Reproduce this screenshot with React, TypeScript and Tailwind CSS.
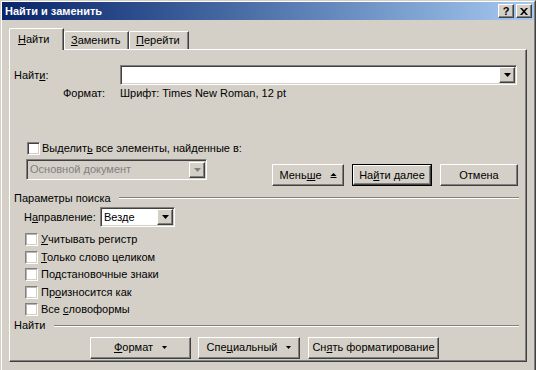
const raised =
  "border border-t-white border-l-white border-r-[#404040] border-b-[#404040] shadow-[inset_-1px_-1px_0_#808080] bg-[#d4d0c8]";
const sunken =
  "border border-t-[#808080] border-l-[#808080] border-r-white border-b-white shadow-[inset_1px_1px_0_#404040,inset_-1px_-1px_0_#d4d0c8]";

function U({ children }: { children: string }) {
  return <span className="underline underline-offset-[1px] decoration-1">{children}</span>;
}

function DownArrow({ color = "#000" }: { color?: string }) {
  return (
    <svg width="7" height="4" viewBox="0 0 7 4">
      <polygon points="0,0 7,0 3.5,4" fill={color} />
    </svg>
  );
}

function DropButton({ disabled }: { disabled?: boolean }) {
  return (
    <div className={`${raised} w-[16px] h-[16px] flex items-center justify-center`}>
      <DownArrow color={disabled ? "#808080" : "#000"} />
    </div>
  );
}

function CheckBox({ soft }: { soft?: boolean }) {
  return (
    <div
      className={
        soft
          ? "w-[13px] h-[13px] bg-white border border-t-[#808080] border-l-[#808080] border-r-white border-b-white shadow-[inset_1px_1px_0_#b8b4ac,inset_-1px_-1px_0_#d4d0c8]"
          : `w-[13px] h-[13px] bg-white ${sunken}`
      }
    />
  );
}

function Button({ width, children, isDefault }: { width: string; children: React.ReactNode; isDefault?: boolean }) {
  if (isDefault) {
    return (
      <div className={`${width} h-[22px] border border-black`}>
        <div className={`${raised} h-full flex items-center justify-center`}>{children}</div>
      </div>
    );
  }
  return <div className={`${raised} ${width} h-[22px] flex items-center justify-center`}>{children}</div>;
}

function Separator({ label, gap }: { label: string; gap: string }) {
  return (
    <div className="h-[14px] flex items-center pl-[4px] pr-[7px]">
      <span>{label}</span>
      <div className={`flex-1 ${gap} h-[2px] border-t border-t-[#808080] border-b border-b-white`} />
    </div>
  );
}

export default function App() {
  const options = [
    <>
      <U>У</U>читывать регистр
    </>,
    <>
      <U>Т</U>олько слово целиком
    </>,
    <>Подстановочные знаки</>,
    <>
      Пр<U>о</U>износится как
    </>,
    <>
      Все <U>с</U>ловоформы
    </>,
  ];

  return (
    <div className="w-[536px] h-[370px] overflow-hidden bg-[#d4d0c8] border-t border-l border-[#d4d0c8] border-r border-r-[#404040] font-['Liberation_Sans',Arial,sans-serif] text-[11px] leading-[13px] text-black">
      <div className="h-full border-t border-l border-white border-r border-r-[#808080]">
        {/* title bar */}
        <div className="h-[18px] bg-linear-to-r from-[#0a246a] to-[#a6caf0] flex items-center pl-[3px] pr-[2px]">
          <span className="text-white font-bold">Найти и заменить</span>
          <div className="ml-auto flex gap-[2px]">
            <div className={`${raised} w-[16px] h-[14px] flex items-center justify-center font-bold text-[11px] leading-none`}>?</div>
            <div className={`${raised} w-[16px] h-[14px] flex items-center justify-center`}>
              <svg width="8" height="7" viewBox="0 0 8 7">
                <path d="M0 0h2l2 2.2L6 0h2L5 3.5 8 7H6L4 4.8 2 7H0l3-3.5z" fill="#000" />
              </svg>
            </div>
          </div>
        </div>

        <div className="px-[7px]">
          {/* tabs */}
          <div className="mt-[8px] h-[21px] flex items-end">
            <div className="relative z-10 -mb-px w-[55px] h-[22px] bg-[#d4d0c8] border-t border-l border-white border-r border-r-[#404040] rounded-tl-[2px] shadow-[inset_-1px_0_0_#808080] flex items-center pl-[8px]">
              <span>
                <U>Н</U>айти
              </span>
            </div>
            <div className="w-[65px] h-[18px] border-t border-l border-white border-r border-r-[#404040] rounded-tl-[2px] shadow-[inset_-1px_0_0_#808080] flex items-center pl-[6px]">
              <span>
                <U>З</U>аменить
              </span>
            </div>
            <div className="w-[60px] h-[18px] border-t border-l border-white border-r border-r-[#404040] rounded-tl-[2px] shadow-[inset_-1px_0_0_#808080] flex items-center pl-[6px]">
              <span>
                <U>П</U>ерейти
              </span>
            </div>
          </div>

          {/* panel */}
          <div className="h-[313px] border border-t-white border-l-white border-r-[#404040] border-b-[#404040] shadow-[inset_-1px_-1px_0_#808080] flex flex-col">
            <div className="mt-[15px] h-[20px] flex items-center">
              <span className="pl-[4px] w-[110px]">
                Найт<U>и</U>:
              </span>
              <div className={`${sunken} bg-white w-[397px] h-[20px] flex items-center justify-end pr-[1px]`}>
                <DropButton />
              </div>
            </div>

            <div className="mt-[1px] h-[14px] flex items-center pl-[53px]">
              <span className="w-[57px]">Формат:</span>
              <span>Шрифт: Times New Roman, 12 pt</span>
            </div>

            <div className="mt-[41px] flex items-start">
              <div className="pl-[16px]">
                <div className="h-[14px] flex items-center gap-[2px] pl-[1px]">
                  <CheckBox />
                  <span>
                    Выделит<U>ь</U> все элементы, найденные в:
                  </span>
                </div>
                <div className={`${sunken} mt-[4px] w-[181px] h-[21px] flex items-center justify-between pl-[3px] pr-[1px]`}>
                  <span className="text-[#808080]">Основной документ</span>
                  <DropButton disabled />
                </div>
              </div>
              <div className="ml-auto mr-[8px] mt-[23px] flex gap-[8px]">
                <Button width="w-[72px]">
                  <span>
                    Мень<U>ш</U>е
                  </span>
                  <svg className="ml-[8px]" width="7" height="7" viewBox="0 0 7 7">
                    <polygon points="0.5,4 3.5,1 6.5,4" fill="#000" />
                    <rect x="0.5" y="5" width="6" height="1" fill="#000" />
                  </svg>
                </Button>
                <Button width="w-[80px]" isDefault>
                  <span>
                    На<U>й</U>ти далее
                  </span>
                </Button>
                <Button width="w-[78px]">
                  <span>Отмена</span>
                </Button>
              </div>
            </div>

            <div className="mt-[5px]">
              <Separator label="Параметры поиска" gap="ml-[8px]" />
            </div>

            <div className="mt-[2px] h-[20px] flex items-center pl-[14px]">
              <span className="w-[76px]">
                Н<U>а</U>правление:
              </span>
              <div className={`${sunken} bg-white w-[75px] h-[20px] flex items-center justify-between pl-[3px] pr-[1px]`}>
                <span>Везде</span>
                <DropButton />
              </div>
            </div>

            <div className="mt-[4px] pl-[15px] flex flex-col">
              {options.map((o, i) => (
                <div key={i} className="h-[17.5px] flex items-center gap-[3px]">
                  <CheckBox soft />
                  <span>{o}</span>
                </div>
              ))}
            </div>

            <Separator label="Найти" gap="ml-[9px]" />

            <div className="mt-[4px] flex pl-[80px]">
              <Button width="w-[101px]">
                <span>
                  <U>Ф</U>ормат
                </span>
                <svg className="ml-[9px]" width="5" height="3" viewBox="0 0 5 3">
                  <polygon points="0,0 5,0 2.5,3" fill="#000" />
                </svg>
              </Button>
              <div className="ml-[7px]">
                <Button width="w-[102px]">
                  <span>
                    Спе<U>ц</U>иальный
                  </span>
                  <svg className="ml-[9px]" width="5" height="3" viewBox="0 0 5 3">
                    <polygon points="0,0 5,0 2.5,3" fill="#000" />
                  </svg>
                </Button>
              </div>
              <div className="ml-[8px]">
                <Button width="w-[131px]">
                  <span>
                    Сн<U>я</U>ть форматирование
                  </span>
                </Button>
              </div>
            </div>
          </div>
        </div>
      </div>
    </div>
  );
}
